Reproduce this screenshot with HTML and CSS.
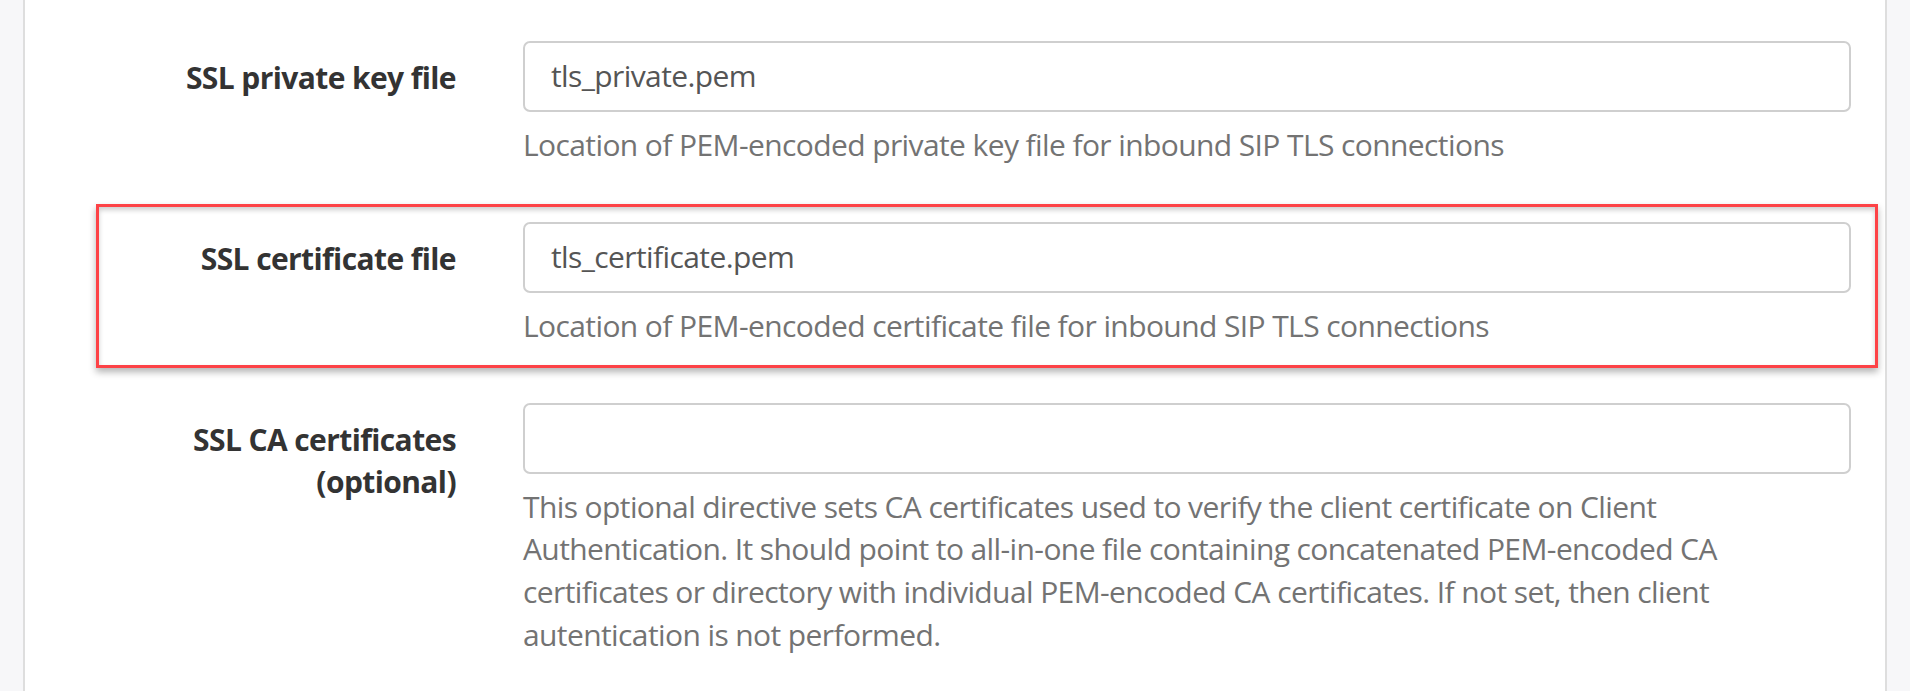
FILE: index.html
```html
<!DOCTYPE html>
<html>
<head>
<meta charset="utf-8">
<link rel="stylesheet" href="styles.css">
</head>
<body>
<div class="page">
  <div class="side"></div>
  <div class="panel">
    <div class="group">
      <label class="label">SSL private key file</label>
      <div class="field">
        <div class="input">tls_private.pem</div>
        <p class="help">Location of PEM-encoded private key file for inbound SIP TLS connections</p>
      </div>
    </div>
    <div class="group highlight">
      <label class="label">SSL certificate file</label>
      <div class="field">
        <div class="input">tls_certificate.pem</div>
        <p class="help">Location of PEM-encoded certificate file for inbound SIP TLS connections</p>
      </div>
    </div>
    <div class="group">
      <label class="label">SSL CA certificates (optional)</label>
      <div class="field">
        <div class="input"></div>
        <p class="help">This optional directive sets CA certificates used to verify the client certificate on Client Authentication. It should point to all-in-one file containing concatenated PEM-encoded CA certificates or directory with individual PEM-encoded CA certificates. If not set, then client autentication is not performed.</p>
      </div>
    </div>
  </div>
  <div class="side"></div>
</div>
</body>
</html>
```
FILE: styles.css
```css
html, body {
  margin: 0;
  padding: 0;
  background: #f7f7f9;
  font-family: "Open Sans", "Liberation Sans", sans-serif;
  font-size: 30px;
  line-height: 42.8px;
  letter-spacing: -0.6px;
  color: #333;
}
.page {
  display: flex;
  height: 691px;
  overflow: hidden;
}
.side {
  width: 23px;
  flex: none;
  background: #f7f7f9;
}
.panel {
  flex: 1;
  background: #fff;
  border-left: 2px solid #dedede;
  border-right: 2px solid #dedede;
  padding-top: 23px;
}
.group {
  display: grid;
  grid-template-columns: 357px 1fr;
  column-gap: 67px;
  margin: 0 7px 17px 71px;
  padding: 15px 24px 17px 0;
  border: 3px solid transparent;
}
.group.highlight {
  border-color: #fd4246;
  box-shadow: 0 4px 7px rgba(0, 0, 0, 0.3), inset 0 3px 5px rgba(0, 0, 0, 0.2);
}
.label {
  font-weight: 700;
  text-align: right;
  padding-top: 16px;
  color: #333;
}
.field {
  min-width: 0;
}
.input {
  box-sizing: border-box;
  height: 71px;
  border: 2px solid #cfcfcf;
  border-radius: 7px;
  padding: 0 26px;
  display: flex;
  align-items: center;
  color: #555;
  background: #fff;
  white-space: nowrap;
}
.help {
  margin: 12px 0 0;
  color: #737373;
}
```
